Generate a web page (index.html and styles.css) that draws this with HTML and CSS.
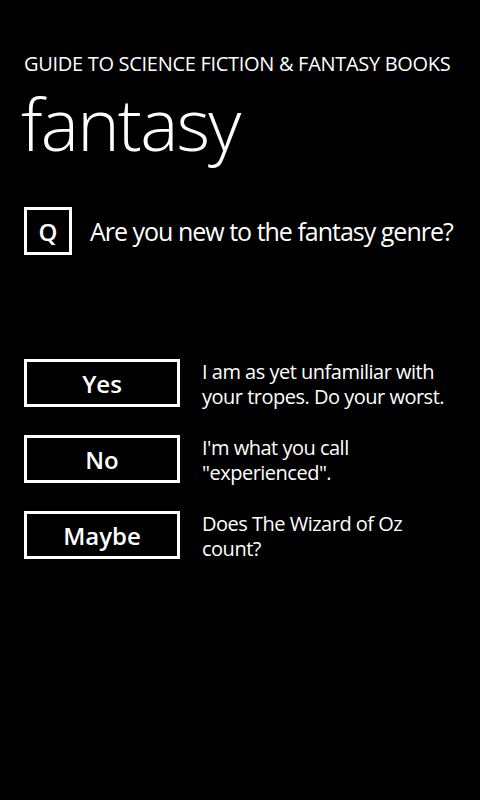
FILE: index.html
```html
<!DOCTYPE html>
<html>
<head>
<meta charset="utf-8">
<link rel="stylesheet" href="styles.css">
</head>
<body>
<div class="page">
  <div class="app-title">GUIDE TO SCIENCE FICTION &amp; FANTASY BOOKS</div>
  <div class="page-title">fantasy</div>
  <div class="question">
    <div class="qbox">Q</div>
    <div class="qtext">Are you new to the fantasy genre?</div>
  </div>
  <div class="answers">
    <div class="answer">
      <div class="abtn">Yes</div>
      <div class="adesc">I am as yet unfamiliar with your tropes. Do your worst.</div>
    </div>
    <div class="answer">
      <div class="abtn">No</div>
      <div class="adesc">I'm what you call "experienced".</div>
    </div>
    <div class="answer">
      <div class="abtn">Maybe</div>
      <div class="adesc">Does The Wizard of Oz count?</div>
    </div>
  </div>
</div>
</body>
</html>
```

FILE: styles.css
```css
html, body {
  margin: 0;
  padding: 0;
  background: #000;
  color: #fff;
  width: 480px;
  height: 800px;
  overflow: hidden;
}
.page {
  padding: 50px 0 0 24px;
  font-family: "Open Sans", "Noto Sans", sans-serif;
}
.app-title {
  font-size: 20px;
  line-height: 27px;
  letter-spacing: -0.3px;
  white-space: nowrap;
}
.page-title {
  margin-top: 6px;
  margin-left: -3px;
  font-size: 72px;
  line-height: 80px;
  font-weight: 300;
  letter-spacing: -1.8px;
}
.question {
  margin-top: 44px;
  display: flex;
  align-items: center;
  gap: 18px;
}
.qbox {
  box-sizing: border-box;
  flex: none;
  width: 48px;
  height: 48px;
  border: 3px solid #fff;
  display: flex;
  align-items: center;
  justify-content: center;
  font-size: 24px;
  font-weight: 600;
}
.qtext {
  font-size: 25px;
  letter-spacing: -1px;
  white-space: nowrap;
}
.answers {
  margin-top: 104px;
  display: flex;
  flex-direction: column;
  gap: 28px;
}
.answer {
  display: flex;
  align-items: flex-start;
  gap: 22px;
  height: 48px;
}
.abtn {
  box-sizing: border-box;
  width: 156px;
  height: 48px;
  border: 3px solid #fff;
  display: flex;
  align-items: center;
  justify-content: center;
  font-size: 24px;
  font-weight: 600;
  flex: none;
}
.adesc {
  width: 250px;
  font-size: 20px;
  line-height: 25px;
  letter-spacing: -0.5px;
}
```
